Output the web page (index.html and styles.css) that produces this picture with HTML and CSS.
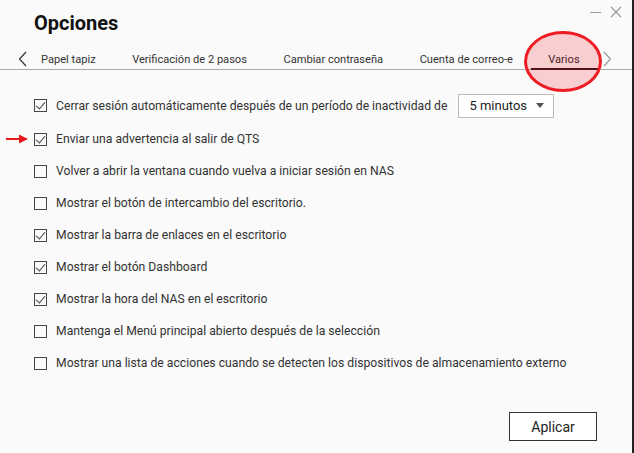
FILE: index.html
```html
<!DOCTYPE html>
<html lang="es">
<head>
<meta charset="UTF-8">
<title>Opciones</title>
<link rel="stylesheet" href="styles.css">
</head>
<body>
    <div class="window">
        <div class="header">
            <h1>Opciones</h1>
            <div class="win-controls">
                <svg width="12" height="12" viewBox="0 0 12 12"><path d="M0 6.5H11" stroke="#999" stroke-width="1"/></svg>
                <svg width="12" height="12" viewBox="0 0 12 12"><path d="M1 1L11 11M11 1L1 11" stroke="#999" stroke-width="1.2"/></svg>
            </div>
        </div>

        <div class="tabs">
            <span class="chev">
                <svg width="10" height="16" viewBox="0 0 10 16"><path d="M8 1L1.5 8L8 15" fill="none" stroke="#333" stroke-width="1.2"/></svg>
            </span>
            <a href="#" class="tab">Papel tapiz</a>
            <a href="#" class="tab">Verificación de 2 pasos</a>
            <a href="#" class="tab">Cambiar contraseña</a>
            <a href="#" class="tab">Cuenta de correo-e</a>
            <a href="#" class="tab active">Varios</a>
            <span class="chev next">
                <svg width="10" height="16" viewBox="0 0 10 16"><path d="M2 1L8.5 8L2 15" fill="none" stroke="#999" stroke-width="1.2"/></svg>
            </span>
            <div class="mark-circle"></div>
        </div>

        <div class="options">
            <label class="option first">
                <span class="box checked"></span>
                <span>Cerrar sesión automáticamente después de un período de inactividad de</span>
                <span class="select">5 minutos <i class="caret"></i></span>
            </label>
            <label class="option">
                <span class="mark-arrow">
                    <svg width="24" height="10" viewBox="0 0 24 10"><path d="M0 5H16" stroke="#e8191d" stroke-width="2"/><path d="M13 0.5L22 5L13 9.5Z" fill="#e8191d"/></svg>
                </span>
                <span class="box checked"></span>
                <span>Enviar una advertencia al salir de QTS</span>
            </label>
            <label class="option">
                <span class="box"></span>
                <span>Volver a abrir la ventana cuando vuelva a iniciar sesión en NAS</span>
            </label>
            <label class="option">
                <span class="box"></span>
                <span>Mostrar el botón de intercambio del escritorio.</span>
            </label>
            <label class="option">
                <span class="box checked"></span>
                <span>Mostrar la barra de enlaces en el escritorio</span>
            </label>
            <label class="option">
                <span class="box checked"></span>
                <span>Mostrar el botón Dashboard</span>
            </label>
            <label class="option">
                <span class="box checked"></span>
                <span>Mostrar la hora del NAS en el escritorio</span>
            </label>
            <label class="option">
                <span class="box"></span>
                <span>Mantenga el Menú principal abierto después de la selección</span>
            </label>
            <label class="option">
                <span class="box"></span>
                <span>Mostrar una lista de acciones cuando se detecten los dispositivos de almacenamiento externo</span>
            </label>
        </div>

        <div class="footer">
            <button class="apply-button">Aplicar</button>
        </div>
    </div>
</body>
</html>
```

FILE: styles.css
```css
body {
    margin: 0;
    padding: 0;
    font-family: Roboto, "Liberation Sans", sans-serif;
    background-color: #fafafa;
    color: #333;
}

.window {
    position: relative;
    width: 632px;
    height: 453px;
    border-right: 2px solid #222;
    background-color: #fafafa;
}

.header {
    display: flex;
    justify-content: space-between;
    height: 41px;
}

.header h1 {
    margin: 0;
    padding: 11px 0 0 34px;
    font-size: 20px;
    font-weight: bold;
    color: #111;
}

.win-controls {
    display: flex;
    gap: 8px;
    padding: 6px 10px 0 0;
}

.tabs {
    position: relative;
    display: flex;
    align-items: flex-end;
    height: 28px;
    border-bottom: 1px solid #aaa;
    padding-left: 18px;
}

.chev {
    display: flex;
    width: 12px;
    margin-bottom: 2px;
}

.chev.next {
    margin-left: 3px;
}

.tab {
    font-size: 11.1px;
    color: #333;
    text-decoration: none;
    padding: 0 18.25px;
    line-height: 18px;
    height: 18px;
}

.chev + .tab {
    padding-left: 11px;
}

.tab.active {
    padding: 0 19px 0 17px;
    box-shadow: inset 0 -2px 0 #2a1212;
    color: #222;
    margin-bottom: -1px;
    height: 19px;
}

.mark-circle {
    position: absolute;
    left: 524px;
    top: -10px;
    width: 72px;
    height: 55px;
    border: 3px solid #ee1c22;
    border-radius: 50%;
    background-color: rgba(240, 30, 40, 0.2);
}

.options {
    padding: 18px 0 0 34px;
}

.option {
    position: relative;
    display: flex;
    align-items: center;
    gap: 9px;
    height: 32px;
    font-size: 12.2px;
    color: #333;
}

.option.first {
    height: 35px;
}

.box {
    width: 11px;
    height: 11px;
    border: 1px solid #444;
    flex-shrink: 0;
    position: relative;
}

.box.checked::after {
    content: "";
    position: absolute;
    left: 3px;
    top: 0;
    width: 4px;
    height: 8px;
    border-right: 1.2px solid #444;
    border-bottom: 1.2px solid #444;
    transform: rotate(40deg);
}

.select {
    display: flex;
    align-items: center;
    justify-content: space-between;
    box-sizing: border-box;
    width: 96px;
    height: 24px;
    margin-left: 2px;
    padding: 0 9px 0 10px;
    border: 1px solid #bbb;
    background-color: #fff;
    color: #222;
    font-size: 13px;
}

.caret {
    width: 0;
    height: 0;
    border-left: 4px solid transparent;
    border-right: 4px solid transparent;
    border-top: 5px solid #555;
}

.mark-arrow {
    position: absolute;
    left: -28px;
    top: 11px;
    display: flex;
}

.footer {
    display: flex;
    justify-content: flex-end;
    padding: 33px 35px 0 0;
}

.apply-button {
    width: 88px;
    height: 29px;
    border: 1px solid #333;
    background-color: #fff;
    color: #222;
    font-family: Roboto, "Liberation Sans", sans-serif;
    font-size: 14px;
}
```
